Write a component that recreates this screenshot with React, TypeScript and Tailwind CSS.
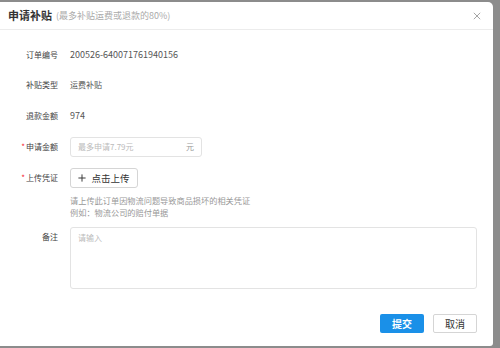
import React from 'react';

const font = { fontFamily: '"Noto Sans CJK SC", "Liberation Sans", sans-serif' };

const Row: React.FC<{ label: string; required?: boolean; children: React.ReactNode; className?: string }> = ({ label, required, children, className }) => (
    <div className={`flex ${className ?? ''}`}>
        <div className="w-[58px] h-[20px] shrink-0 text-right text-[8px] leading-[20px] text-[#444]">
            {required && <span className="text-[#f5222d] mr-[1px]">*</span>}
            {label}
        </div>
        <div className="ml-[12px] flex-1">{children}</div>
    </div>
);

export default function App() {
    return (
        <div className="w-[500px] h-[348px] bg-[#8c8c8c] pt-[2px] overflow-hidden" style={font}>
            <div className="w-[493px] h-[344px] bg-white rounded-tr-[5px] rounded-br-[3px] flex flex-col">
                <div className="h-[28px] shrink-0 flex items-center pl-[8px] pr-[8px] border-b border-[#ececec]">
                    <span className="text-[11px] font-bold text-[#333]">申请补贴</span>
                    <span className="text-[9px] text-[#aaa] ml-[4px] mt-[1px]">(最多补贴运费或退款的80%)</span>
                    <span className="ml-auto text-[#999] mr-[4px]">
                        <svg width="8" height="8" viewBox="0 0 10 10" stroke="currentColor" strokeWidth="1.1" fill="none">
                            <path d="M1 1L9 9M9 1L1 9" />
                        </svg>
                    </span>
                </div>
                <div className="pt-[15px] pr-[16px] flex flex-col">
                    <Row label="订单编号">
                        <div className="h-[20px] text-[9px] leading-[20px] text-[#555]">200526-640071761940156</div>
                    </Row>
                    <Row label="补贴类型" className="mt-[10px]">
                        <div className="h-[20px] text-[8px] leading-[20px] text-[#555]">运费补贴</div>
                    </Row>
                    <Row label="退款金额" className="mt-[11px]">
                        <div className="h-[20px] text-[9px] leading-[20px] text-[#555]">974</div>
                    </Row>
                    <Row label="申请金额" required className="mt-[11px]">
                        <div className="w-[132px] h-[20px] border border-[#e3e3e3] rounded-[3px] flex items-center px-[7px] text-[8px] text-[#bbb]">
                            <span>最多申请7.79元</span>
                            <span className="ml-auto text-[#999]">元</span>
                        </div>
                    </Row>
                    <Row label="上传凭证" required className="mt-[11px]">
                        <div className="w-[68px] h-[20px] border border-[#d5d5d5] rounded-[3px] flex items-center justify-center gap-[5px] text-[9.5px] text-[#333]">
                            <svg width="8" height="8" viewBox="0 0 10 10" stroke="currentColor" strokeWidth="1.2" fill="none">
                                <path d="M5 0.5V9.5M0.5 5H9.5" />
                            </svg>
                            <span>点击上传</span>
                        </div>
                        <div className="mt-[6px] text-[8.2px] leading-[12px] text-[#999]">
                            <div>请上传此订单因物流问题导致商品损坏的相关凭证</div>
                            <div>例如：物流公司的赔付单据</div>
                        </div>
                    </Row>
                    <Row label="备注" className="mt-[9px]">
                        <div className="h-[62px] border border-[#e3e3e3] rounded-[3px] px-[7px] py-[4px] text-[8px] text-[#bbb]">
                            请输入
                        </div>
                    </Row>
                </div>
                <div className="mt-auto mb-[13px] pr-[16px] flex justify-end gap-[9px]">
                    <div className="w-[44px] h-[19px] bg-[#1a90e8] rounded-[2px] flex items-center justify-center text-[10px] font-bold text-white">提交</div>
                    <div className="w-[44px] h-[19px] border border-[#d5d5d5] rounded-[2px] flex items-center justify-center text-[10px] text-[#333]">取消</div>
                </div>
            </div>
        </div>
    );
}
